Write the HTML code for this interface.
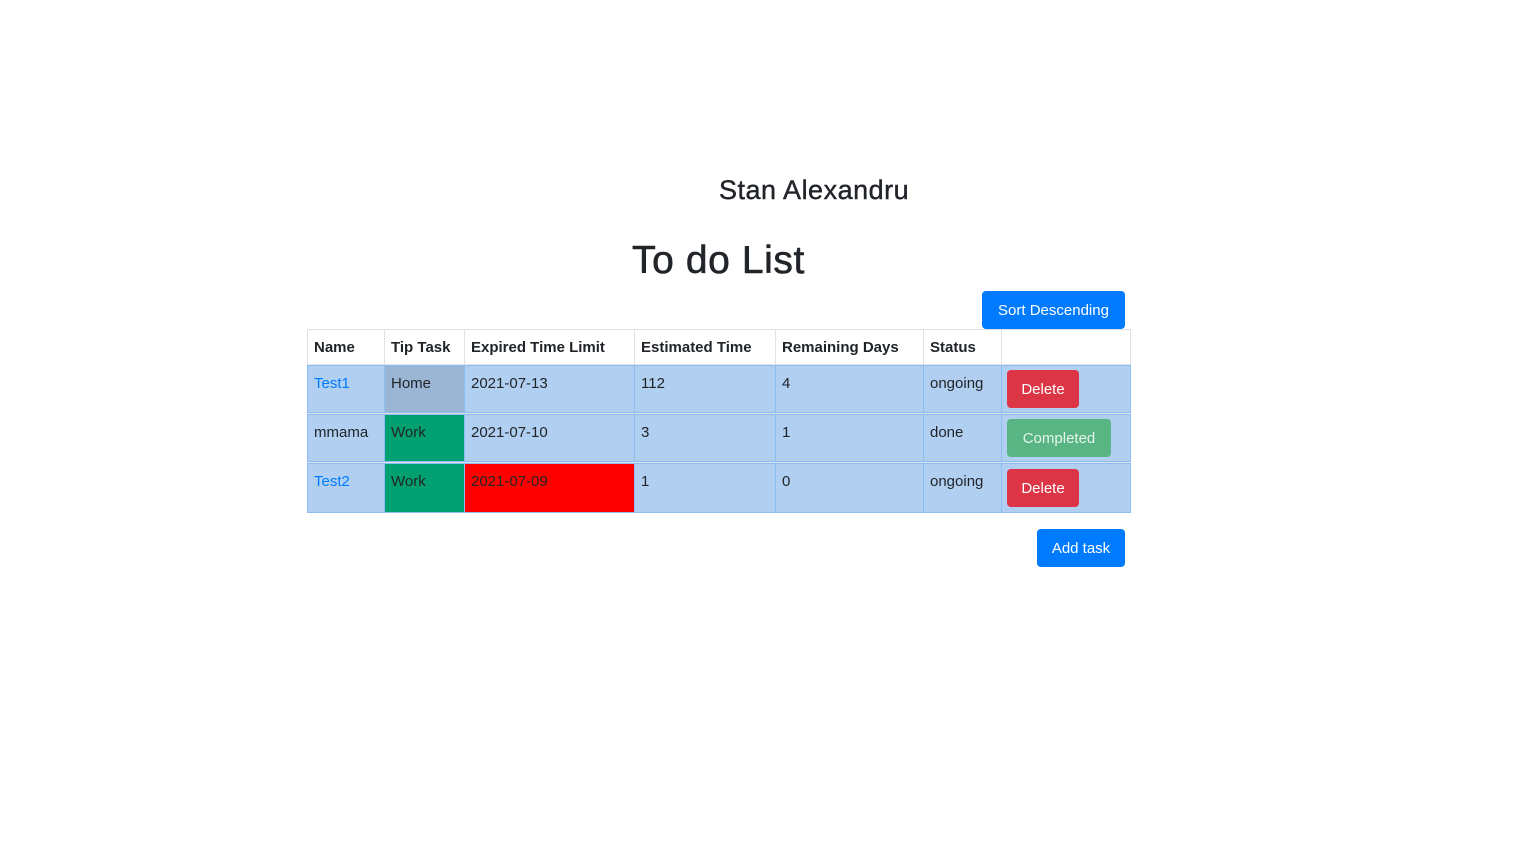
<!DOCTYPE html>
<html><head><meta charset="utf-8"><style>
body{margin:0;width:1536px;height:864px;background:#fff;font-family:"Liberation Sans",sans-serif;color:#212529;position:relative;overflow:hidden}
.a{position:absolute;box-sizing:border-box}
.c{position:absolute;box-sizing:border-box;padding:9px 6px 8px;font-size:15px;white-space:nowrap}
.h{font-weight:bold;background:#fff;border:1px solid #dee2e6}
.b{background:#b0cff1;border:1px solid #8dbdf3}
.btn{position:absolute;box-sizing:border-box;color:#fff;font-size:15px;border-radius:4px;text-align:center;line-height:40px;height:38px}
a{color:#007bff}
</style></head><body>
<div class="a" style="left:719px;top:175px;font-size:27px;letter-spacing:0.5px;-webkit-text-stroke:0.4px #212529">Stan Alexandru</div>
<div class="a" style="left:632px;top:239px;font-size:39px;letter-spacing:0.6px;-webkit-text-stroke:0.6px #212529">To do List</div>
<div class="btn" style="left:982px;top:291px;width:143px;background:#007bff">Sort Descending</div>

<div class="c h" style="left:307px;top:329px;width:78px;height:36px">Name</div>
<div class="c h" style="left:384px;top:329px;width:81px;height:36px">Tip Task</div>
<div class="c h" style="left:464px;top:329px;width:171px;height:36px">Expired Time Limit</div>
<div class="c h" style="left:634px;top:329px;width:142px;height:36px">Estimated Time</div>
<div class="c h" style="left:775px;top:329px;width:149px;height:36px">Remaining Days</div>
<div class="c h" style="left:923px;top:329px;width:79px;height:36px">Status</div>
<div class="c h" style="left:1001px;top:329px;width:130px;height:36px"></div>

<div class="a" style="left:307px;top:412px;width:824px;height:3px;background:#dee2e6"></div>
<div class="a" style="left:307px;top:461px;width:824px;height:3px;background:#dee2e6"></div>

<div class="c b" style="left:307px;top:365px;width:78px;height:48px"><a>Test1</a></div>
<div class="c b" style="left:384px;top:365px;width:81px;height:48px;background:#9bb5d4">Home</div>
<div class="c b" style="left:464px;top:365px;width:171px;height:48px">2021-07-13</div>
<div class="c b" style="left:634px;top:365px;width:142px;height:48px">112</div>
<div class="c b" style="left:775px;top:365px;width:149px;height:48px">4</div>
<div class="c b" style="left:923px;top:365px;width:79px;height:48px">ongoing</div>
<div class="c b" style="left:1001px;top:365px;width:130px;height:48px"></div>
<div class="btn" style="left:1007px;top:370px;width:72px;background:#dc3545">Delete</div>

<div class="c b" style="left:307px;top:414px;width:78px;height:48px">mmama</div>
<div class="c b" style="left:384px;top:414px;width:81px;height:48px;background:#00a070">Work</div>
<div class="c b" style="left:464px;top:414px;width:171px;height:48px">2021-07-10</div>
<div class="c b" style="left:634px;top:414px;width:142px;height:48px">3</div>
<div class="c b" style="left:775px;top:414px;width:149px;height:48px">1</div>
<div class="c b" style="left:923px;top:414px;width:79px;height:48px">done</div>
<div class="c b" style="left:1001px;top:414px;width:130px;height:48px"></div>
<div class="btn" style="left:1007px;top:419px;width:104px;background:#59b684;color:#e6f4ec">Completed</div>

<div class="c b" style="left:307px;top:463px;width:78px;height:50px"><a>Test2</a></div>
<div class="c b" style="left:384px;top:463px;width:81px;height:50px;background:#00a070">Work</div>
<div class="c b" style="left:464px;top:463px;width:171px;height:50px;background:#ff0000">2021-07-09</div>
<div class="c b" style="left:634px;top:463px;width:142px;height:50px">1</div>
<div class="c b" style="left:775px;top:463px;width:149px;height:50px">0</div>
<div class="c b" style="left:923px;top:463px;width:79px;height:50px">ongoing</div>
<div class="c b" style="left:1001px;top:463px;width:130px;height:50px"></div>
<div class="btn" style="left:1007px;top:469px;width:72px;background:#dc3545">Delete</div>

<div class="btn" style="left:1037px;top:529px;width:88px;background:#007bff">Add task</div>
</body></html>
